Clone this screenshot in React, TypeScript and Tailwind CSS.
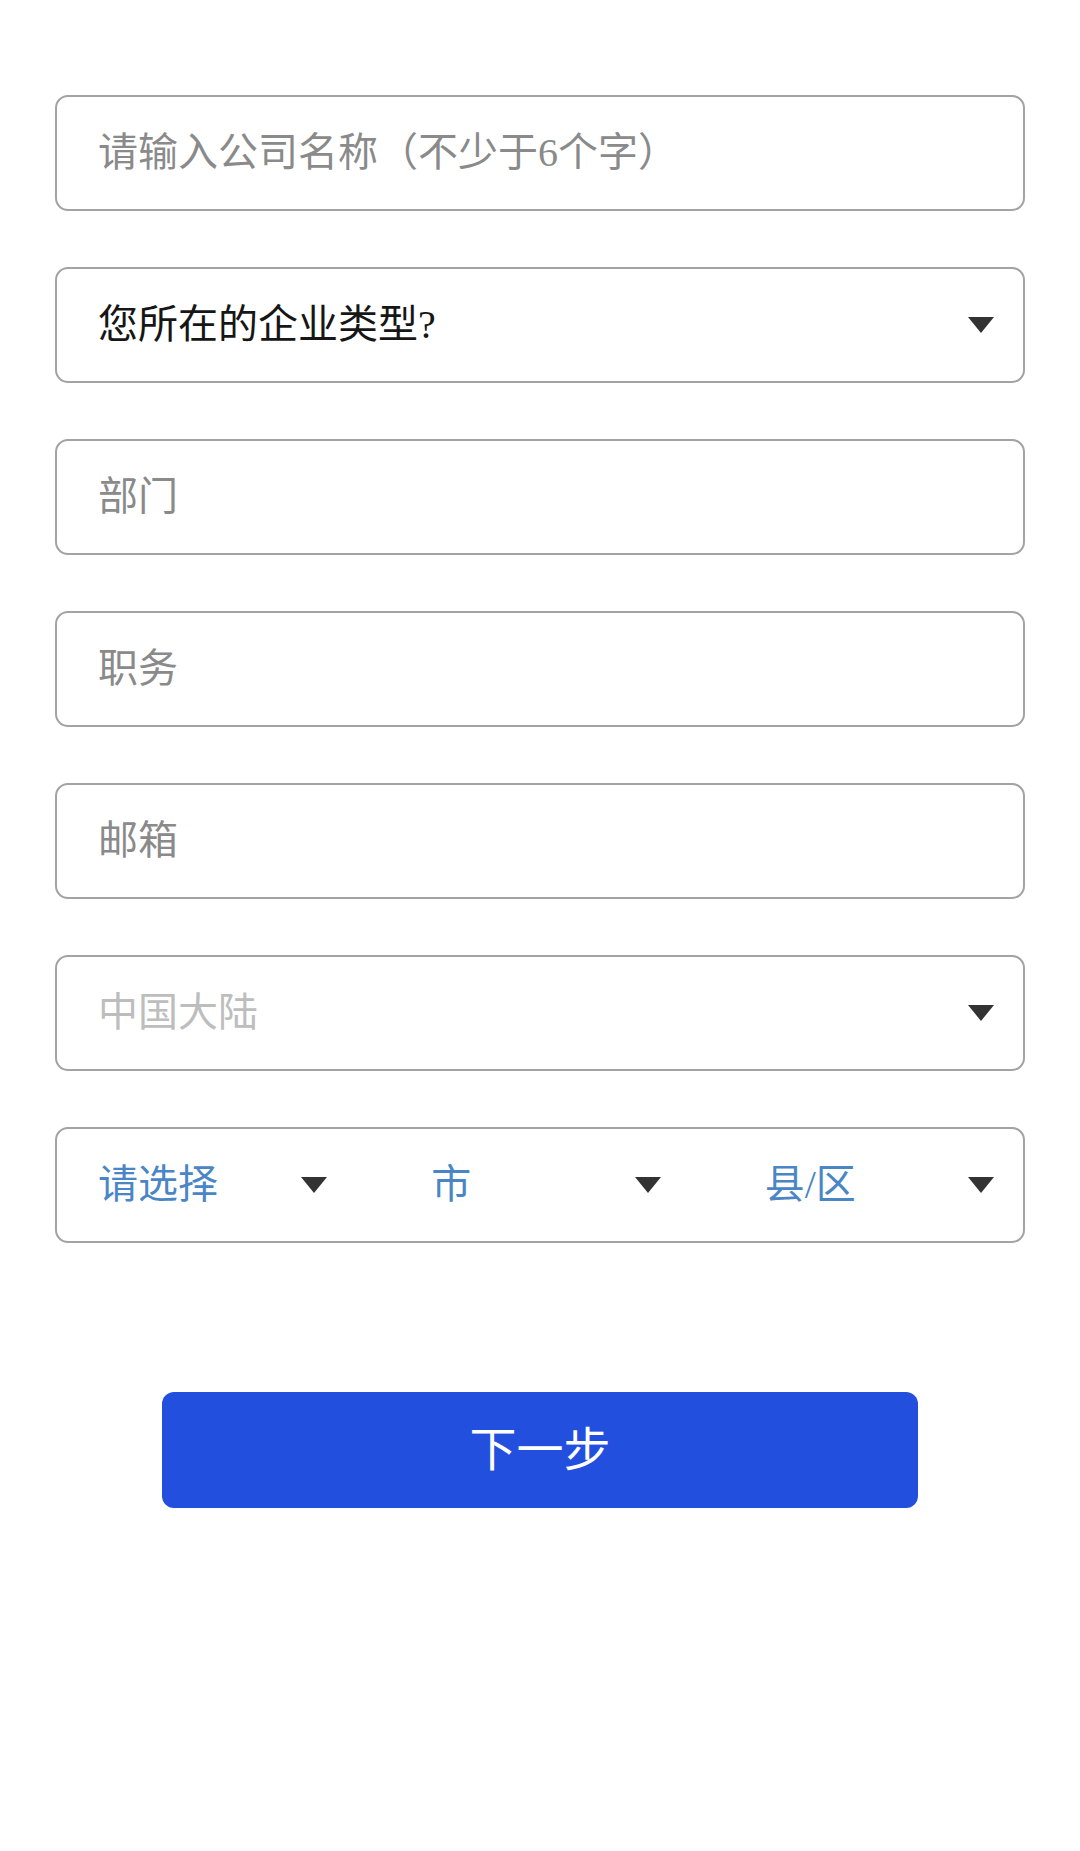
const font = { fontFamily: '"Liberation Serif", "Noto Sans CJK SC", serif' };

const Caret = () => (
  <svg width="26" height="16" viewBox="0 0 26 16" className="shrink-0">
    <polygon points="0,0 26,0 13,16" fill="#333333" />
  </svg>
);

const Field = ({ label, color }: { label: string; color: string }) => (
  <div className="flex h-[116px] items-center rounded-[13px] border-2 border-[#a3a3a3] pl-[41px] pr-[29px]">
    <span className={`text-[40px] leading-none ${color}`}>{label}</span>
  </div>
);

const SelectField = ({ label, color }: { label: string; color: string }) => (
  <div className="flex h-[116px] items-center justify-between rounded-[13px] border-2 border-[#a3a3a3] pl-[41px] pr-[29px]">
    <span className={`text-[40px] leading-none ${color}`}>{label}</span>
    <Caret />
  </div>
);

export default function App() {
  const regions = ["请选择", "市", "县/区"];

  return (
    <div className="min-h-[1851px] w-full bg-white" style={font}>
      <div className="flex flex-col gap-[56px] px-[55px] pt-[95px]">
        <Field label="请输入公司名称（不少于6个字）" color="text-[#8a8a8a]" />
        <SelectField label="您所在的企业类型?" color="text-[#161616]" />
        <Field label="部门" color="text-[#8a8a8a]" />
        <Field label="职务" color="text-[#8a8a8a]" />
        <Field label="邮箱" color="text-[#8a8a8a]" />
        <SelectField label="中国大陆" color="text-[#bdbdbd]" />
        <div className="grid h-[116px] grid-cols-3 items-center gap-x-[104px] rounded-[13px] border-2 border-[#a3a3a3] pl-[41px] pr-[29px]">
          {regions.map((r) => (
            <div key={r} className="flex items-center justify-between">
              <span className="text-[40px] leading-none text-[#4a86c6]">{r}</span>
              <Caret />
            </div>
          ))}
        </div>
      </div>
      <div className="flex justify-center pt-[149px]">
        <button className="flex h-[116px] w-[756px] items-center justify-center rounded-[12px] bg-[#224fdd] text-[47px] leading-none text-white">
          下一步
        </button>
      </div>
    </div>
  );
}
